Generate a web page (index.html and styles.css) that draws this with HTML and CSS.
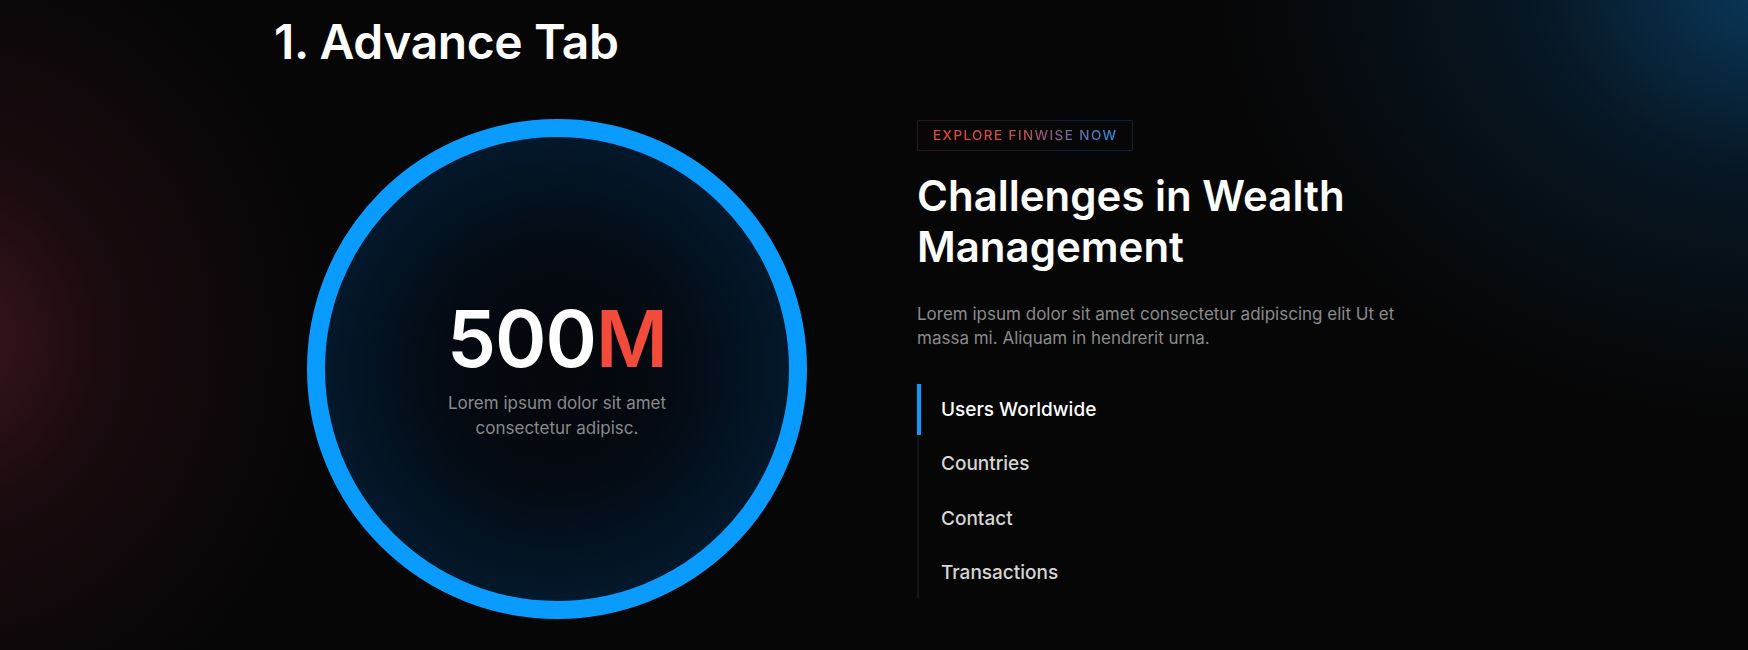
FILE: index.html
```html
<!DOCTYPE html>
<html lang="en">
<head>
<meta charset="utf-8">
<title>Advance Tab</title>
<link rel="stylesheet" href="styles.css">
</head>
<body>
<div class="page">
  <div class="container">
    <h1 class="title">1. Advance Tab</h1>
    <div class="row">
      <div class="stat-circle">
        <div class="stat-value">500<span class="accent">M</span></div>
        <p class="stat-text">Lorem ipsum dolor sit amet<br>consectetur adipisc.</p>
      </div>
      <div class="info">
        <div class="badge"><span class="badge-text">EXPLORE FINWISE NOW</span></div>
        <h2 class="heading">Challenges in Wealth Management</h2>
        <p class="lead">Lorem ipsum dolor sit amet consectetur adipiscing elit Ut et massa mi. Aliquam in hendrerit urna.</p>
        <ul class="tabs">
          <li class="tab active">Users Worldwide</li>
          <li class="tab">Countries</li>
          <li class="tab">Contact</li>
          <li class="tab">Transactions</li>
        </ul>
      </div>
    </div>
  </div>
</div>
</body>
</html>
```

FILE: styles.css
```css
* { box-sizing: border-box; }
html, body { margin: 0; padding: 0; }
body {
  background: #060606;
  font-family: Inter, "Noto Sans", "Liberation Sans", sans-serif;
  color: #fff;
  width: 1748px;
  height: 650px;
  overflow: hidden;
}
.page {
  height: 650px;
  background:
    radial-gradient(ellipse 380px 420px at -50px 340px, rgba(72, 24, 36, 0.85), rgba(46, 16, 24, 0.5) 40%, rgba(6, 6, 6, 0) 100%),
    radial-gradient(ellipse 560px 440px at 1780px -20px, rgba(10, 64, 104, 0.9), rgba(8, 42, 70, 0.45) 45%, rgba(6, 6, 6, 0) 100%),
    #060606;
}
.container {
  width: 1200px;
  margin: 0 auto;
  padding-top: 13px;
}
.title {
  margin: 0;
  font-size: 48px;
  font-weight: 600;
  line-height: 58px;
  letter-spacing: -0.4px;
}
.row {
  display: flex;
  align-items: flex-start;
  gap: 110px;
  margin-top: 48px;
  padding-left: 33px;
}
.stat-circle {
  width: 500px;
  height: 500px;
  flex: 0 0 500px;
  border-radius: 50%;
  border: 18px solid #0a9bff;
  background: radial-gradient(circle at 50% 50%, #05070b 0%, #040a12 35%, #031a2e 75%, #042742 100%);
  display: flex;
  flex-direction: column;
  align-items: center;
  padding-top: 155px;
}
.stat-value {
  font-size: 78px;
  font-weight: 600;
  line-height: 94px;
  letter-spacing: -1px;
}
.accent { color: #f24a3b; }
.stat-text {
  margin: 5px 0 0;
  font-size: 17px;
  line-height: 25px;
  color: #8a8a8a;
  text-align: center;
}
.info {
  width: 480px;
  padding-top: 1px;
}
.badge {
  display: inline-block;
  height: 31px;
  padding: 0 15px;
  border: 1px solid transparent;
  border-radius: 2px;
  background:
    linear-gradient(#070707, #070707) padding-box,
    linear-gradient(90deg, #2e161a, #141b24 50%, #0e2236) border-box;
}
.badge-text {
  display: block;
  line-height: 29px;
  font-size: 13.5px;
  font-weight: 500;
  letter-spacing: 1.4px;
  background: linear-gradient(90deg, #e8483a 0%, #d94a3e 40%, #8f5a7a 62%, #2f8fe0 100%);
  -webkit-background-clip: text;
  background-clip: text;
  color: transparent;
}
.heading {
  margin: 19px 0 0;
  font-size: 42px;
  font-weight: 600;
  line-height: 51px;
  letter-spacing: 0;
}
.lead {
  margin: 30px 0 0;
  font-size: 17px;
  line-height: 24px;
  color: #8a8a8a;
}
.tabs {
  list-style: none;
  margin: 34px 0 0;
  padding: 0;
  border-left: 2px solid #151515;
  display: flex;
  flex-direction: column;
  gap: 3.3px;
}
.tab {
  position: relative;
  height: 51px;
  line-height: 51px;
  padding-left: 22px;
  font-size: 19px;
  font-weight: 500;
  color: #d6d6d6;
}
.tab.active { color: #fff; }
.tab.active::before {
  content: "";
  position: absolute;
  left: -2px;
  top: 0;
  bottom: 0;
  width: 4px;
  background: #0a9bff;
}
```
